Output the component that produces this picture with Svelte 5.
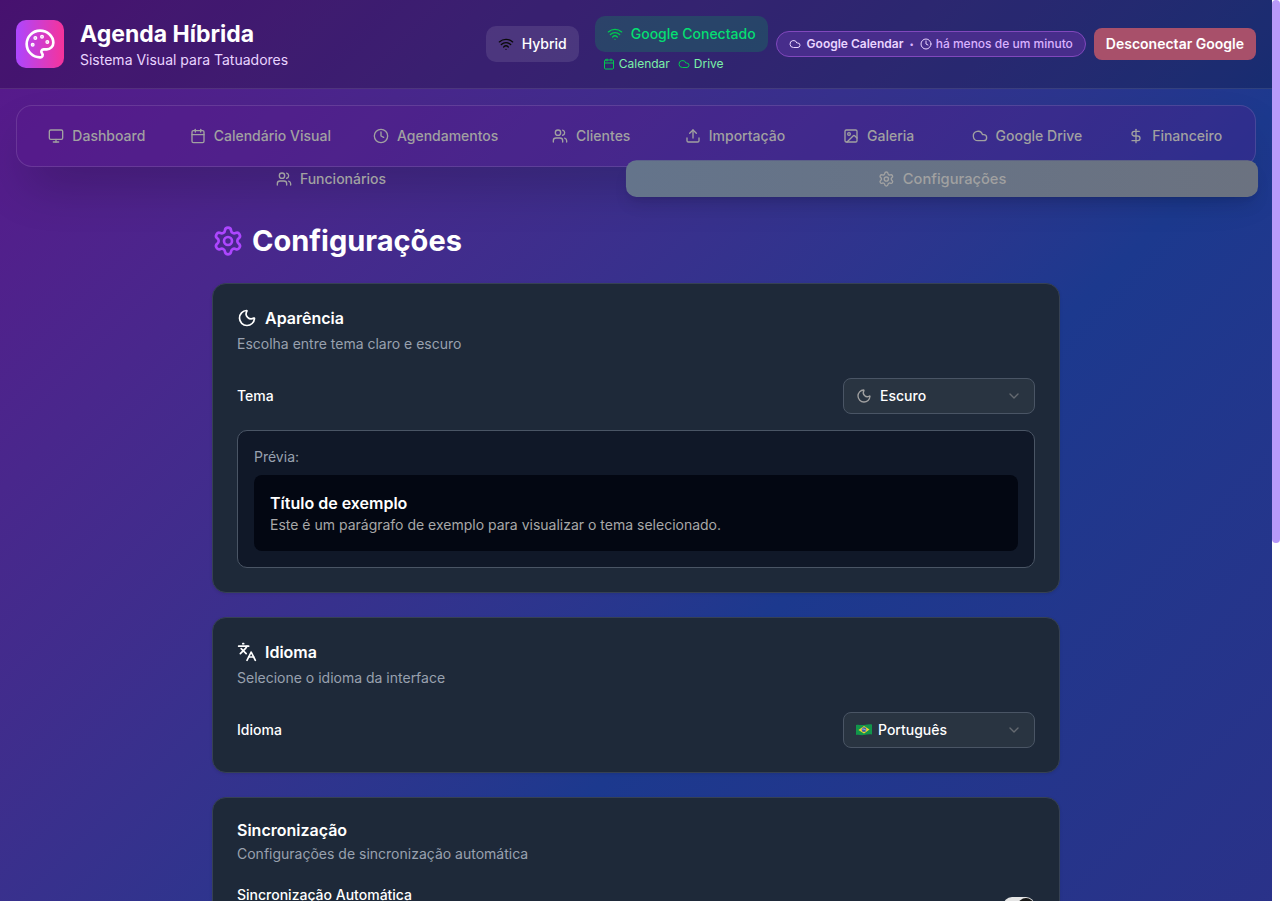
<script lang="ts">
  const icons: Record<string, string> = {
    palette:
      '<path d="M12 22a1 1 0 0 1 0-20 10 9 0 0 1 10 9 5 5 0 0 1-5 5h-2.25a1.75 1.75 0 0 0-1.4 2.8l.3.4a1.75 1.75 0 0 1-1.4 2.8z"/><circle cx="13.5" cy="6.5" r=".5" fill="currentColor"/><circle cx="17.5" cy="10.5" r=".5" fill="currentColor"/><circle cx="6.5" cy="12.5" r=".5" fill="currentColor"/><circle cx="8.5" cy="7.5" r=".5" fill="currentColor"/>',
    wifi: '<path d="M12 20h.01"/><path d="M2 8.82a15 15 0 0 1 20 0"/><path d="M5 12.859a10 10 0 0 1 14 0"/><path d="M8.5 16.429a5 5 0 0 1 7 0"/>',
    calendar: '<path d="M8 2v4"/><path d="M16 2v4"/><rect width="18" height="18" x="3" y="4" rx="2"/><path d="M3 10h18"/>',
    cloud: '<path d="M17.5 19H9a7 7 0 1 1 6.71-9h1.79a4.5 4.5 0 1 1 0 9Z"/>',
    clock: '<circle cx="12" cy="12" r="10"/><path d="M12 6v6l4 2"/>',
    monitor: '<rect width="20" height="14" x="2" y="3" rx="2"/><path d="M8 21h8"/><path d="M12 17v4"/>',
    users:
      '<path d="M16 21v-2a4 4 0 0 0-4-4H6a4 4 0 0 0-4 4v2"/><path d="M16 3.128a4 4 0 0 1 0 7.744"/><path d="M22 21v-2a4 4 0 0 0-3-3.87"/><circle cx="9" cy="7" r="4"/>',
    upload: '<path d="M12 3v12"/><path d="m17 8-5-5-5 5"/><path d="M21 15v4a2 2 0 0 1-2 2H5a2 2 0 0 1-2-2v-4"/>',
    image: '<rect width="18" height="18" x="3" y="3" rx="2"/><circle cx="9" cy="9" r="2"/><path d="m21 15-3.086-3.086a2 2 0 0 0-2.828 0L6 21"/>',
    dollar: '<path d="M12 2v20"/><path d="M17 5H9.5a3.5 3.5 0 0 0 0 7h5a3.5 3.5 0 0 1 0 7H6"/>',
    settings:
      '<path d="M9.671 4.136a2.34 2.34 0 0 1 4.659 0 2.34 2.34 0 0 0 3.319 1.915 2.34 2.34 0 0 1 2.33 4.033 2.34 2.34 0 0 0 0 3.831 2.34 2.34 0 0 1-2.33 4.033 2.34 2.34 0 0 0-3.319 1.915 2.34 2.34 0 0 1-4.659 0 2.34 2.34 0 0 0-3.32-1.915 2.34 2.34 0 0 1-2.33-4.033 2.34 2.34 0 0 0 0-3.831A2.34 2.34 0 0 1 6.35 6.051a2.34 2.34 0 0 0 3.319-1.915"/><circle cx="12" cy="12" r="3"/>',
    moon: '<path d="M20.985 12.486a9 9 0 1 1-9.473-9.472c.405-.022.617.46.402.803a6 6 0 0 0 8.268 8.268c.344-.215.825-.004.803.401"/>',
    languages:
      '<path d="m5 8 6 6"/><path d="m4 14 6-6 2-3"/><path d="M2 5h12"/><path d="M7 2h1"/><path d="m22 22-5-10-5 10"/><path d="M14 18h6"/>',
    chevron: '<path d="m6 9 6 6 6-6"/>'
  };

  const tabs = [
    { label: 'Dashboard', icon: 'monitor' },
    { label: 'Calendário Visual', icon: 'calendar' },
    { label: 'Agendamentos', icon: 'clock' },
    { label: 'Clientes', icon: 'users' },
    { label: 'Importação', icon: 'upload' },
    { label: 'Galeria', icon: 'image' },
    { label: 'Google Drive', icon: 'cloud' },
    { label: 'Financeiro', icon: 'dollar' },
    { label: 'Funcionários', icon: 'users' },
    { label: 'Configurações', icon: 'settings' }
  ];

  let active = $state('Configurações');
  let theme = $state('dark');
  let language = $state('pt');
  let autoSync = $state(true);

  let viewHeight = $state(1);
  let pageHeight = $state(1);
  let scrollTop = $state(0);
  const thumbSize = $derived(Math.min(100, (viewHeight / pageHeight) * 100));
  const thumbStart = $derived((scrollTop / pageHeight) * 100);
</script>

{#snippet icon(name: string, size: number)}
  <svg
    class="icon"
    width={size}
    height={size}
    viewBox="0 0 24 24"
    fill="none"
    stroke="currentColor"
    stroke-width="2"
    stroke-linecap="round"
    stroke-linejoin="round"
    aria-hidden="true">{@html icons[name]}</svg>
{/snippet}

<div class="shell">
  <div class="scroller" bind:clientHeight={viewHeight} onscroll={(e) => (scrollTop = e.currentTarget.scrollTop)}>
    <div class="page" bind:clientHeight={pageHeight}>
      <header>
        <div class="brand">
          <span class="logo">{@render icon('palette', 32)}</span>
          <div>
            <h1>Agenda Híbrida</h1>
            <p>Sistema Visual para Tatuadores</p>
          </div>
        </div>
        <div class="status">
          <span class="chip hybrid">{@render icon('wifi', 16)}Hybrid</span>
          <div class="google">
            <span class="chip connected">{@render icon('wifi', 16)}Google Conectado</span>
            <div class="services">
              <span>{@render icon('calendar', 12)}Calendar</span>
              <span>{@render icon('cloud', 12)}Drive</span>
            </div>
          </div>
          <div class="sync-pill">
            {@render icon('cloud', 12)}
            <strong>Google Calendar</strong>
            <span class="dot">•</span>
            <span class="ago">{@render icon('clock', 12)}há menos de um minuto</span>
          </div>
          <button type="button" class="disconnect">Desconectar Google</button>
        </div>
      </header>

      <nav>
        {#each tabs as tab}
          <button type="button" class:active={active === tab.label} onclick={() => (active = tab.label)}>
            {@render icon(tab.icon, 16)}{tab.label}
          </button>
        {/each}
      </nav>

      <main>
        <h2>{@render icon('settings', 32)}Configurações</h2>

        <section class="card">
          <h3>{@render icon('moon', 20)}Aparência</h3>
          <p class="hint">Escolha entre tema claro e escuro</p>
          <div class="row">
            <label for="theme">Tema</label>
            <div class="select">
              <span class="lead">{@render icon('moon', 16)}</span>
              <select id="theme" class="wide-lead" bind:value={theme}>
                <option value="light">Claro</option>
                <option value="dark">Escuro</option>
              </select>
              <span class="chevron">{@render icon('chevron', 16)}</span>
            </div>
          </div>
          <div class="preview">
            <p class="preview-label">Prévia:</p>
            <div class="sample">
              <h4>Título de exemplo</h4>
              <p>Este é um parágrafo de exemplo para visualizar o tema selecionado.</p>
            </div>
          </div>
        </section>

        <section class="card">
          <h3>{@render icon('languages', 20)}Idioma</h3>
          <p class="hint">Selecione o idioma da interface</p>
          <div class="row">
            <label for="language">Idioma</label>
            <div class="select">
              <span class="lead">
                <svg class="icon" width="16" height="16" viewBox="0 0 16 16" aria-hidden="true">
                  <path d="M0 3c2.500-1 5 .5 8 0s5.500-1.200 8-.6v10c-2.500-.6-5 0-8 .6s-5.500-.8-8 0z" fill="#12964b" />
                  <path d="M2.500 8 8 4l5.500 3.500L8 11.500z" fill="#f6d32b" />
                  <circle cx="8" cy="7.700" r="2.400" fill="#3b5fa8" />
                  <path d="M5.800 7.100c1.500-.3 3 .1 4.300 1.300" stroke="#dfe8f5" stroke-width=".6" fill="none" />
                </svg>
              </span>
              <select id="language" bind:value={language}>
                <option value="pt">Português</option>
                <option value="en">English</option>
              </select>
              <span class="chevron">{@render icon('chevron', 16)}</span>
            </div>
          </div>
        </section>

        <section class="card">
          <h3 class="plain">Sincronização</h3>
          <p class="hint">Configurações de sincronização automática</p>
          <div class="row sync-row">
            <label class="top" for="auto-sync">Sincronização Automática</label>
            <input id="auto-sync" type="checkbox" role="switch" bind:checked={autoSync} />
          </div>
        </section>
      </main>
    </div>
  </div>
  <div class="track" aria-hidden="true">
    <div class="thumb" style="height: {thumbSize}%; top: {thumbStart}%"></div>
  </div>
</div>

<style>
  :global(body) {
    margin: 0;
    font-family: Inter, 'Liberation Sans', sans-serif;
    font-size: 14px;
    line-height: 20px;
    color: #fff;
  }

  .shell, .shell :global(*) {
    box-sizing: border-box;
  }

  h1, h2, h3, h4, p {
    margin: 0;
  }

  button, select {
    font: inherit;
    cursor: pointer;
  }

  .icon {
    display: block;
    flex: none;
  }

  .shell {
    display: grid;
    grid-template-columns: minmax(0, 1fr) 8px;
    height: 100vh;
  }

  .scroller {
    overflow-y: auto;
    scrollbar-width: none;
  }

  .page {
    min-height: 166vh;
    background: linear-gradient(135deg in oklab, #59168b, #1c398e 50%, #312c85);
  }

  .track {
    position: relative;
    background: #fff;
  }

  .thumb {
    position: absolute;
    width: 100%;
    border-radius: 4px;
    background: #b99bfa;
  }

  header {
    display: flex;
    justify-content: space-between;
    align-items: center;
    gap: 16px;
    padding: 16px;
    background: rgb(0 0 0 / 20%);
    border-bottom: 1px solid rgb(255 255 255 / 10%);
  }

  .brand {
    display: flex;
    align-items: center;
    gap: 16px;
  }

  .logo {
    display: grid;
    place-items: center;
    width: 48px;
    height: 48px;
    border-radius: 10px;
    background: linear-gradient(to right, #ad46ff, #f6339a);
  }

  h1 {
    font-size: 23px;
    line-height: 32px;
    font-weight: 700;
  }

  .brand p {
    color: #e9d4ff;
  }

  .status {
    display: flex;
    align-items: center;
    gap: 8px;
    font-weight: 500;
  }

  .chip {
    display: flex;
    align-items: center;
    gap: 8px;
    padding: 8px 12px;
    border-radius: 10px;
  }

  .hybrid {
    margin-right: 8px;
    background: rgb(255 255 255 / 10%);
  }

  .hybrid .icon {
    color: #0a0a0a;
  }

  .google {
    display: flex;
    flex-direction: column;
    gap: 4px;
  }

  .connected {
    background: rgb(0 201 80 / 20%);
    color: #05df72;
  }

  .connected .icon,
  .services .icon {
    color: #00c950;
  }

  .services {
    display: flex;
    gap: 8px;
    padding: 0 8px;
    font-size: 12px;
    line-height: 16px;
    font-weight: 400;
    color: #7bf1a8;
  }

  .services span,
  .ago {
    display: flex;
    align-items: center;
    gap: 4px;
  }

  .sync-pill {
    display: flex;
    align-items: center;
    gap: 6px;
    padding: 4px 12px;
    border: 1px solid #8148bd;
    border-radius: 16px;
    background: #472d8b;
    font-size: 12px;
    line-height: 16px;
    color: #dab2ff;
  }

  .sync-pill strong {
    font-weight: 600;
    color: #e9d4ff;
  }

  .sync-pill .icon {
    color: #e9d4ff;
  }

  .dot {
    font-size: 8px;
  }

  .disconnect {
    height: 32px;
    padding: 0 12px;
    border: 0;
    border-radius: 8px;
    background: #a8506a;
    color: #fff;
    font-weight: 600;
  }

  nav {
    display: flex;
    flex-wrap: wrap;
    align-content: flex-start;
    gap: 8px;
    height: 62px;
    margin: 16px 16px 0;
    padding: 12px;
    border: 1px solid rgb(255 255 255 / 12%);
    border-radius: 16px;
    background: rgb(89 22 139 / 30%);
    box-shadow: 0 25px 50px -12px rgb(0 0 0 / 25%);
  }

  nav button {
    display: flex;
    flex: 1 0 0;
    justify-content: center;
    align-items: center;
    gap: 8px;
    height: 35px;
    padding: 4px 16px;
    border: 1px solid transparent;
    border-radius: 10px;
    background: none;
    color: #a1a1a1;
    font-weight: 500;
    white-space: nowrap;
  }

  nav button.active {
    border: 0;
    background: linear-gradient(to right, #64748b, #6b7280);
    box-shadow: 0 10px 15px -3px rgb(0 0 0 / 10%), 0 4px 6px -4px rgb(0 0 0 / 10%);
    scale: 1.05;
  }

  main {
    display: flex;
    flex-direction: column;
    gap: 24px;
    max-width: 896px;
    margin: 32px auto 0;
    padding: 24px;
  }

  h2 {
    display: flex;
    align-items: center;
    gap: 8px;
    font-size: 29px;
    line-height: 36px;
    font-weight: 700;
  }

  h2 .icon {
    color: #ad46ff;
  }

  .card {
    padding: 24px;
    border: 1px solid #364153;
    border-radius: 14px;
    background: #1e2939;
    box-shadow: 0 1px 3px rgb(0 0 0 / 10%);
  }

  h3 {
    display: flex;
    align-items: center;
    gap: 8px;
    font-size: 16px;
    line-height: 20px;
    font-weight: 600;
  }

  h3.plain {
    line-height: 16px;
  }

  .hint {
    margin: 6px 0 24px;
    color: #99a1af;
  }

  .row {
    display: flex;
    justify-content: space-between;
    align-items: center;
  }

  label {
    font-weight: 500;
    line-height: 14px;
  }

  .select {
    display: grid;
    align-items: center;
    width: 192px;
  }

  .select > * {
    grid-area: 1 / 1;
  }

  select {
    width: 100%;
    height: 36px;
    padding: 0 32px 0 34px;
    border: 1px solid #4a5565;
    border-radius: 8px;
    background: #293441;
    color: #fff;
    font-weight: 500;
    appearance: none;
  }

  select.wide-lead {
    padding-left: 36px;
  }

  .lead,
  .chevron {
    z-index: 1;
    padding: 0 13px;
    color: #a1a1a1;
    pointer-events: none;
  }

  .chevron {
    justify-self: end;
    opacity: 0.5;
  }

  .preview {
    margin-top: 16px;
    padding: 16px;
    border: 1px solid #4a5565;
    border-radius: 10px;
    background: #101828;
  }

  .preview-label {
    margin-bottom: 8px;
    color: #99a1af;
  }

  .sample {
    padding: 16px;
    border-radius: 8px;
    background: #030712;
  }

  h4 {
    font-size: 16px;
    line-height: 24px;
    font-weight: 600;
  }

  .sample p {
    color: #a8a8a8;
  }

  .sync-row {
    min-height: 36px;
  }

  .top {
    align-self: flex-start;
  }

  input[type='checkbox'] {
    display: flex;
    width: 32px;
    height: 18px;
    margin: 0;
    padding: 1px;
    border-radius: 9px;
    background: #525252;
    appearance: none;
  }

  input[type='checkbox']::before {
    content: '';
    width: 16px;
    height: 16px;
    border-radius: 8px;
    background: #171717;
  }

  input[type='checkbox']:checked {
    justify-content: flex-end;
    background: #e5e5e5;
  }
</style>
